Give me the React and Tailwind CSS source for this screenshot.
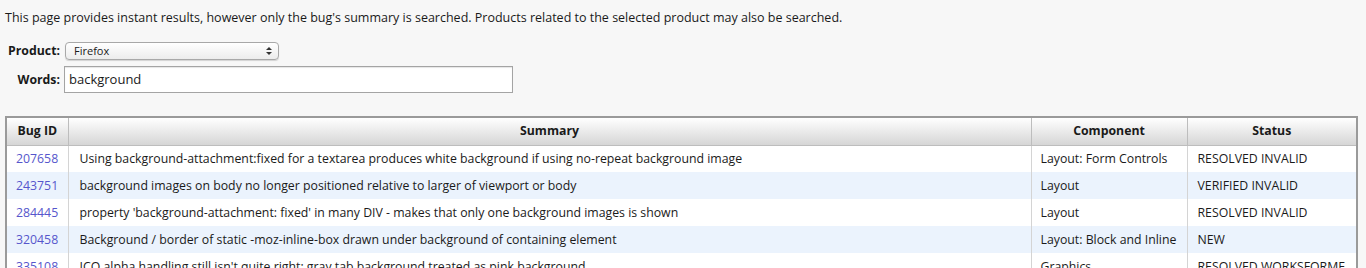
import React from "react";

const rows = [
  ["207658", "Using background-attachment:fixed for a textarea produces white background if using no-repeat background image", "Layout: Form Controls", "RESOLVED INVALID"],
  ["243751", "background images on body no longer positioned relative to larger of viewport or body", "Layout", "VERIFIED INVALID"],
  ["284445", "property 'background-attachment: fixed' in many DIV - makes that only one background images is shown", "Layout", "RESOLVED INVALID"],
  ["320458", "Background / border of static -moz-inline-box drawn under background of containing element", "Layout: Block and Inline", "NEW"],
  ["335108", "ICO alpha handling still isn't quite right; gray tab background treated as pink background", "Graphics", "RESOLVED WORKSFORME"],
];

export default function App() {
  return (
    <div className="h-[268px] overflow-hidden bg-[#f7f7f7] text-[12.3px] text-[#1a1a1a]" style={{ fontFamily: '"Open Sans", "Noto Sans", sans-serif' }}>
      <p className="pl-[5px] pt-[10px] text-[12.5px] leading-[16px]">
        This page provides instant results, however only the bug's summary is searched. Products related to the selected product may also be searched.
      </p>
      <div className="mt-[16px] grid grid-cols-[60px_auto] items-center gap-x-[4px] gap-y-[6px]">
        <label className="text-right font-bold">Product:</label>
        <div className="relative ml-[1px] flex h-[18px] w-[214px] items-center rounded-[4px] border border-[#a8a8a8] bg-gradient-to-b from-white to-[#ececec] pl-[8px] text-[11px] shadow-[0_1px_1px_rgba(0,0,0,0.15)]">
          Firefox
          <svg className="absolute right-[6px] top-[3px]" width="6" height="10" viewBox="0 0 6 10">
            <path d="M0 4 L3 1 L6 4 Z" fill="#333" />
            <path d="M0 6 L3 9 L6 6 Z" fill="#333" />
          </svg>
        </div>
        <label className="text-right font-bold">Words:</label>
        <div className="flex h-[27px] w-[449px] items-center border border-[#a4a4a4] bg-white pl-[4px] text-[13px] shadow-[inset_0_1px_1px_rgba(0,0,0,0.1)]">
          background
        </div>
      </div>
      <div className="ml-[5px] mr-[8px] mt-[23px] border-2 border-[#9a9a9a] border-b-0">
        <table className="w-full border-collapse">
          <thead>
            <tr className="h-[27px] bg-gradient-to-b from-white to-[#d6d6d6]">
              <th className="w-[61px] border-r border-b border-[#bdbdbd] font-bold">Bug ID</th>
              <th className="border-r border-b border-[#bdbdbd] font-bold">Summary</th>
              <th className="w-[156px] border-r border-b border-[#bdbdbd] font-bold">Component</th>
              <th className="w-[169px] border-b border-[#bdbdbd] font-bold">Status</th>
            </tr>
          </thead>
          <tbody>
            {rows.map((r, i) => (
              <tr key={r[0]} className={`h-[27px] ${i % 2 === 1 ? "bg-[#ebf3fd]" : "bg-white"}`}>
                <td className="border-r border-[#d4d4d4] pl-[9px] text-[#5656cc]">{r[0]}</td>
                <td className="border-r border-[#d4d4d4] pl-[11px] whitespace-nowrap">{r[1]}</td>
                <td className="border-r border-[#d4d4d4] pl-[9px] whitespace-nowrap">{r[2]}</td>
                <td className="pl-[10px] whitespace-nowrap">{r[3]}</td>
              </tr>
            ))}
          </tbody>
        </table>
      </div>
    </div>
  );
}
